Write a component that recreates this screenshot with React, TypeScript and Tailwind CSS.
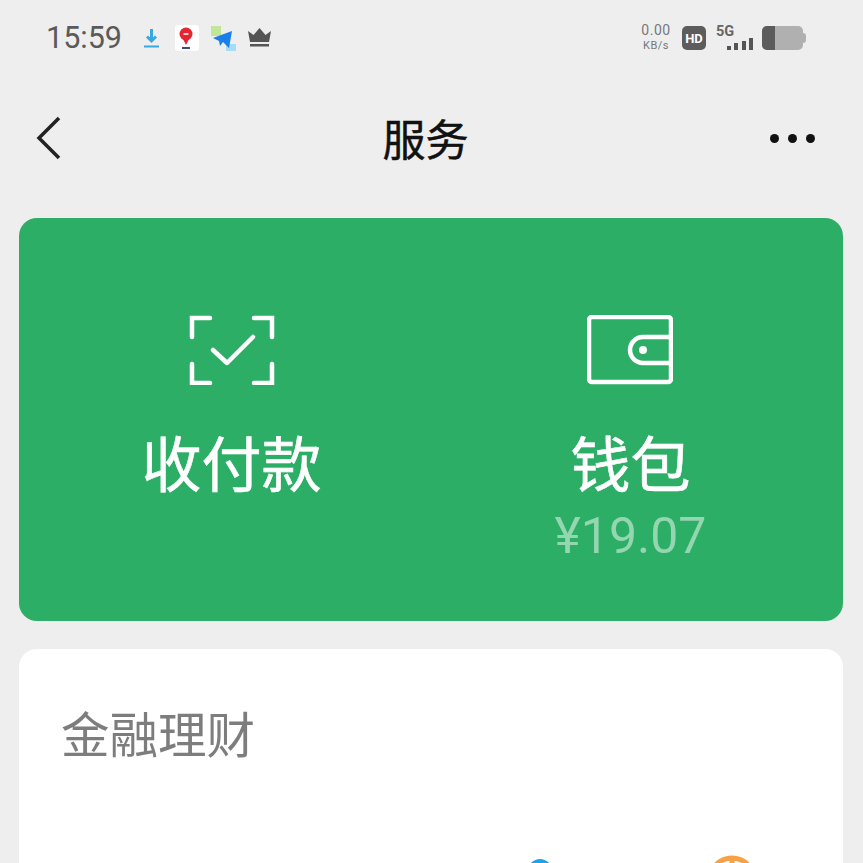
const cjk = "font-['Roboto','Noto_Sans_CJK_SC',sans-serif]"

function StatusBar() {
  return (
    <div className="flex h-[76px] items-center justify-between pl-[46px] pr-[57px]">
      <div className="flex items-center">
        <span className="font-['Roboto',sans-serif] text-[30.5px] leading-none text-[#5a5a5a]">15:59</span>
        <svg className="ml-[22px]" width="15" height="20" viewBox="0 0 15 20" fill="none">
          <path d="M7.500 1v12M3 8.500 7.500 13 12 8.500" stroke="#38a8e0" strokeWidth="3" />
          <path d="M0 18.500h15" stroke="#38a8e0" strokeWidth="2" />
        </svg>
        <svg className="ml-[16px]" width="24" height="26" viewBox="0 0 24 26">
          <rect width="24" height="26" rx="3" fill="#ffffff" />
          <circle cx="11" cy="9" r="6.500" fill="#e5252f" />
          <path d="M8 14h6l-3 6z" fill="#e5252f" />
          <path d="M7 23h8" stroke="#3d4f80" strokeWidth="2" />
          <path d="M8.500 9h5" stroke="#ffffff" strokeWidth="1.500" />
        </svg>
        <svg className="ml-[12px]" width="25" height="25" viewBox="0 0 25 25">
          <rect x="0" y="0" width="10" height="10" fill="#bfe69a" />
          <rect x="15" y="18" width="10" height="7" fill="#a6dcf5" />
          <path d="M2 12 21 5 18 22 12 16 9 20 8 15z" fill="#1a7fe8" />
        </svg>
        <svg className="ml-[11px]" width="25" height="20" viewBox="0 0 25 20">
          <path d="M1 3 6.500 7 12.500 0l6 7L24 3l-2 11H3z" fill="#555555" />
          <rect x="3" y="16" width="19" height="2.500" fill="#555555" />
        </svg>
      </div>
      <div className="flex items-center">
        <div className="flex w-[30px] flex-col items-center font-['Roboto',sans-serif] leading-none text-[#777777]">
          <span className="text-[14px] leading-[15px] tracking-[0.5px]">0.00</span>
          <span className="text-[11px] leading-[15px] tracking-[0.5px]">KB/s</span>
        </div>
        <div className="ml-[11px] flex h-[24px] w-[24px] items-center justify-center rounded-[5px] bg-[#5c5c5c] font-['Roboto',sans-serif] text-[13px] font-bold leading-none text-white">HD</div>
        <div className="ml-[10px] flex w-[38px] flex-col">
          <span className="font-['Roboto',sans-serif] text-[14.500px] font-bold leading-[12px] text-[#666666]">5G</span>
          <svg width="38" height="12" viewBox="0 0 38 12">
            <rect x="11" y="8" width="4" height="4" fill="#555555" />
            <rect x="18" y="5" width="4" height="7" fill="#555555" />
            <rect x="26" y="3" width="4" height="9" fill="#555555" />
            <rect x="33" y="0" width="4" height="12" fill="#555555" />
          </svg>
        </div>
        <div className="ml-[8px] flex h-[24px] w-[41px] overflow-hidden rounded-[5px] bg-[#b0b0b0]">
          <div className="h-full w-[13px] bg-[#5c5c5c]" />
        </div>
        <div className="h-[10px] w-[3px] rounded-r-sm bg-[#b0b0b0]" />
      </div>
    </div>
  )
}

function ScanIcon() {
  return (
    <svg width="86" height="70" viewBox="0 0 86 70" fill="none" stroke="#ffffff" strokeWidth="4.500" strokeLinecap="round">
      <path d="M21 3H3v19M65 3h18v19M3 49v19h18M83 49v19H65" />
      <path d="M24 35 38 48 64 22" strokeLinejoin="round" />
    </svg>
  )
}

function WalletIcon() {
  return (
    <svg className="mr-[2px]" width="86" height="70" viewBox="0 0 86 70" fill="none" stroke="#ffffff" strokeWidth="4.500">
      <rect x="2" y="2" width="82" height="65" rx="3" />
      <path d="M84 22H56a13 13 0 0 0 0 26h28" />
      <circle cx="56" cy="35" r="4" fill="#ffffff" stroke="none" />
    </svg>
  )
}

export default function App() {
  return (
    <div className={`h-[863px] w-[863px] overflow-hidden bg-[#eeeeee] ${cjk}`}>
      <StatusBar />
      <div className="grid h-[124px] grid-cols-3 items-center pl-[36px] pr-[48px]">
        <svg width="26" height="46" viewBox="0 0 26 46" fill="none" stroke="#222222" strokeWidth="3.500">
          <path d="M23 3 3 23l20 20" />
        </svg>
        <span className="pt-[7px] text-center text-[43px] leading-none text-[#111111] [-webkit-text-stroke:0.5px_#111111]">服务</span>
        <div className="flex justify-end gap-[9px]">
          <div className="h-[9px] w-[9px] rounded-full bg-[#111111]" />
          <div className="h-[9px] w-[9px] rounded-full bg-[#111111]" />
          <div className="h-[9px] w-[9px] rounded-full bg-[#111111]" />
        </div>
      </div>
      <div className="mx-[19px] mt-[18px] h-[403px] w-[824px] rounded-[18px] bg-[#2cae66]">
        <div className="grid grid-cols-2 px-[13px] pt-[97px] text-white">
          <div className="flex flex-col items-center">
            <ScanIcon />
            <span className="mt-[47px] text-[60px] leading-[70px] [-webkit-text-stroke:0.6px_#ffffff]">收付款</span>
          </div>
          <div className="flex flex-col items-center">
            <WalletIcon />
            <span className="mt-[47px] text-[60px] leading-[70px] [-webkit-text-stroke:0.6px_#ffffff]">钱包</span>
            <span className="font-['Roboto',sans-serif] text-[50px] leading-[68px] text-[#93d6b0]">¥19.07</span>
          </div>
        </div>
      </div>
      <div className="mx-[19px] mt-[28px] h-[300px] w-[824px] rounded-[18px] bg-white pl-[42px] pt-[56px]">
        <span className="block text-[48.500px] leading-[64px] text-[#7d7d7d]">金融理财</span>
        <div className="mt-[86px] flex items-start pl-[467px]">
          <svg className="mt-[4px]" width="24" height="24" viewBox="0 0 24 24" fill="#1fa3e8">
            <circle cx="12" cy="12" r="12" />
          </svg>
          <svg className="ml-[155px]" width="50" height="50" viewBox="0 0 50 50" fill="none" stroke="#f7a145" strokeWidth="5">
            <circle cx="25" cy="25" r="22" />
            <path d="M25 3v44M3 25h44" />
          </svg>
        </div>
      </div>
    </div>
  )
}
